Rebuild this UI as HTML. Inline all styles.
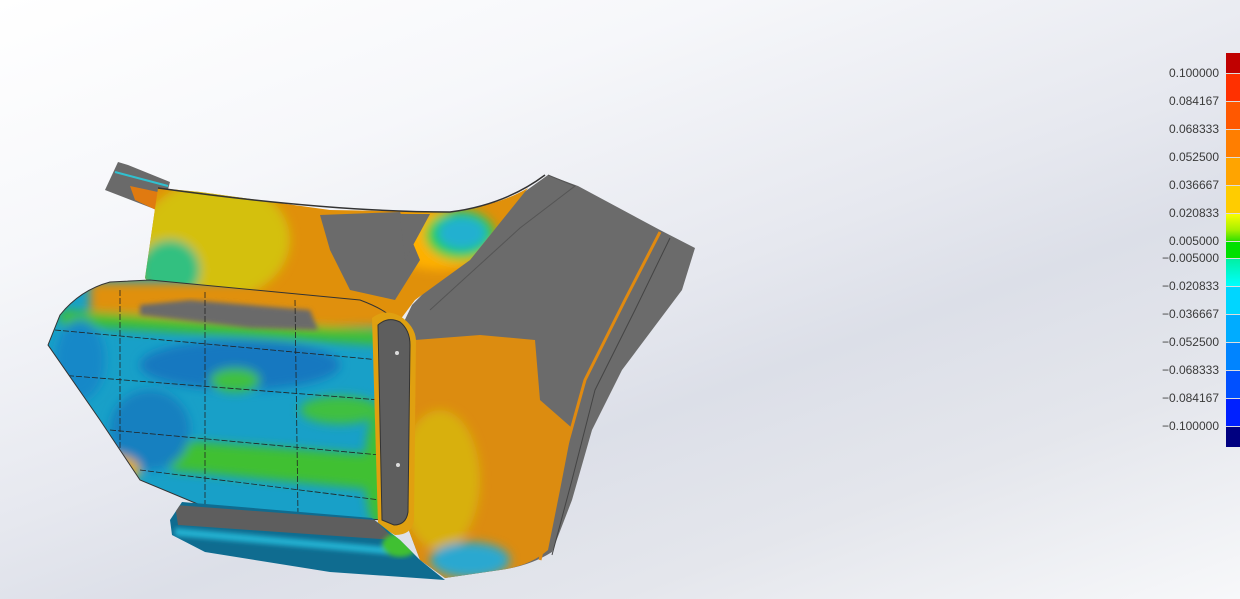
<!DOCTYPE html>
<html><head><meta charset="utf-8"><style>
html,body{margin:0;padding:0;width:1240px;height:599px;overflow:hidden;}
body{background:linear-gradient(160deg,#ffffff 0%,#f6f7fa 25%,#e6e8ef 50%,#dcdfe8 62%,#e4e6ec 78%,#f7f8fa 100%);position:relative;font-family:"Liberation Sans",sans-serif;}
.lg{position:absolute;right:0;width:14px;}
.lb{position:absolute;right:21px;font-size:12px;color:#3a3a3a;transform:translateY(-50%);text-align:right;}
.tk{position:absolute;right:0;width:14px;height:1px;background:#ddd;}
</style></head><body>
<svg width="1240" height="599" style="position:absolute;left:0;top:0">
<defs>
<filter id="b4"><feGaussianBlur stdDeviation="5"/></filter>
<filter id="b2"><feGaussianBlur stdDeviation="2.5"/></filter>
<clipPath id="boxc"><path d="M60,315 Q80,290 110,282 L150,280 L360,300 Q392,312 398,325 L385,520 L300,515 L200,505 L140,480 L100,420 L48,345 Z"/></clipPath>
<clipPath id="upc"><path d="M158,188 L200,192 L330,210 L450,212 Q500,205 528,188 L470,260 L415,300 L400,320 L360,300 L150,285 L145,278 Z"/></clipPath>
<clipPath id="lowc"><path d="M415,340 L480,335 L535,340 L540,400 L572,428 L560,490 L548,550 Q530,566 500,570 L445,578 L420,560 L405,520 Z"/></clipPath>
<clipPath id="lipc"><path d="M170,520 L182,502 L372,518 L400,540 L420,560 L445,580 L330,572 L205,552 L172,535 Z"/></clipPath>
</defs>
<path d="M105,190 L118,162 L128,165 L170,182 L162,212 Z" fill="#6a6a6a"/>
<path d="M130,186 L158,192 L156,210 L135,200 Z" fill="#e07a10"/>
<path d="M115,172 L168,186" stroke="#30c0d0" stroke-width="2"/>
<path d="M412,305 L520,195 L548,175 L578,186 L660,230 L695,248 L682,290 L622,370 L592,430 L572,500 L552,552 Q530,566 500,570 L445,578 L420,560 L405,520 L400,330 Z" fill="#6b6b6b"/>
<path d="M548,175 L575,186 L520,228 L430,310" stroke="#555" fill="none"/>
<path d="M660,232 L625,300 L585,380 L560,470 L540,560" stroke="#e08a10" stroke-width="3" fill="none"/>
<path d="M670,238 L635,310 L595,390 L572,480 L552,555" stroke="#444" fill="none"/>
<g clip-path="url(#upc)">
<rect x="140" y="180" width="400" height="140" fill="#e0900a"/>
<g filter="url(#b4)">
<ellipse cx="215" cy="240" rx="75" ry="60" fill="#d4c010"/>
<ellipse cx="170" cy="270" rx="30" ry="30" fill="#30c080"/>
<ellipse cx="440" cy="240" rx="55" ry="30" fill="#ffb000"/>
<ellipse cx="460" cy="235" rx="35" ry="25" fill="#20d040"/>
<ellipse cx="462" cy="233" rx="25" ry="17" fill="#20b0d0"/>
</g>
<path d="M320,215 L400,212 L420,260 L395,300 L350,290 L330,250 Z" fill="#6b6b6b"/>
<path d="M400,214 L430,214 L405,260 Z" fill="#6b6b6b"/>
<path d="M490,260 L530,190 L540,260 L430,310 L415,300 Z" fill="#6b6b6b"/>
</g>
<path d="M158,188 Q330,212 450,212 Q505,205 545,175" stroke="#333" stroke-width="1.5" fill="none"/>
<g clip-path="url(#lowc)">
<rect x="400" y="330" width="180" height="260" fill="#dc8c10"/>
<g filter="url(#b4)"><ellipse cx="440" cy="480" rx="40" ry="70" fill="#d8b010"/>
<ellipse cx="470" cy="560" rx="40" ry="18" fill="#2aa8d0"/></g>
</g>
<g clip-path="url(#boxc)">
<rect x="40" y="270" width="370" height="260" fill="#18a0c8"/>
<g filter="url(#b4)">
<rect x="90" y="282" width="310" height="45" fill="#e09010"/>
<path d="M60,310 L380,330 L380,345 L60,325 Z" fill="#40c030"/>
<ellipse cx="240" cy="365" rx="100" ry="25" fill="#1878c0"/>
<ellipse cx="80" cy="360" rx="25" ry="40" fill="#1888c8"/>
<ellipse cx="235" cy="380" rx="25" ry="12" fill="#40c040"/>
<ellipse cx="340" cy="410" rx="40" ry="14" fill="#40c040"/>
<path d="M170,440 L380,455 L380,490 L170,470 Z" fill="#40c030"/>
<ellipse cx="150" cy="430" rx="40" ry="40" fill="#1880c0"/>
<ellipse cx="110" cy="470" rx="30" ry="16" fill="#e0b010"/>
<ellipse cx="380" cy="470" rx="15" ry="60" fill="#40c030"/>
</g>
<path d="M140,305 L190,300 L310,310 L318,330 L250,328 L140,315 Z" fill="#6b6b6b" filter="url(#b2)"/>
<g stroke="#222" stroke-width="0.8" fill="none" stroke-dasharray="6,2">
<path d="M120,290 L120,480"/><path d="M205,292 L205,505"/><path d="M295,300 L298,515"/>
<path d="M55,330 L380,360"/><path d="M60,375 L380,400"/><path d="M110,430 L380,455"/><path d="M140,470 L380,500"/>
</g>
</g>
<path d="M60,315 Q80,290 110,282 L150,280 L360,300 Q392,312 398,325 L385,520 L300,515 L200,505 L140,480 L100,420 L48,345 Z" fill="none" stroke="#333"/>
<path d="M372,318 Q385,308 400,316 Q415,326 416,340 L414,520 Q412,535 395,535 L378,525 Z" fill="#e0a010"/>
<path d="M378,325 Q388,316 400,322 Q410,330 410,345 L408,512 Q406,525 394,525 L382,520 Z" fill="#5e5e5e" stroke="#333"/>
<circle cx="397" cy="353" r="2" fill="#ddd"/><circle cx="398" cy="465" r="2" fill="#ddd"/>
<g clip-path="url(#lipc)">
<rect x="165" y="495" width="290" height="90" fill="#0f6c90"/>
<path d="M175,505 L375,520 L395,540 L178,525 Z" fill="#5e5e5e"/>
<g filter="url(#b2)"><path d="M175,528 L400,548 L405,556 L175,536 Z" fill="#20b0d0"/>
<ellipse cx="400" cy="545" rx="18" ry="12" fill="#40c030"/></g>
</g>
</svg>
<div class="lg" style="top:53px;height:20px;background:#c00000"></div>
<div class="lg" style="top:73px;height:28px;background:#ff3000"></div>
<div class="lg" style="top:101px;height:28px;background:#ff5800"></div>
<div class="lg" style="top:129px;height:28px;background:#ff7e00"></div>
<div class="lg" style="top:157px;height:28px;background:#ffa400"></div>
<div class="lg" style="top:185px;height:28px;background:#ffcc00"></div>
<div class="lg" style="top:213px;height:28px;background:linear-gradient(#ffff00,#a8f000 60%,#30e000)"></div>
<div class="lg" style="top:241px;height:17px;background:#00e000"></div>
<div class="lg" style="top:258px;height:28px;background:linear-gradient(#00f0a0,#00ffff)"></div>
<div class="lg" style="top:286px;height:28px;background:#00d6ff"></div>
<div class="lg" style="top:314px;height:28px;background:#00acff"></div>
<div class="lg" style="top:342px;height:28px;background:#0084ff"></div>
<div class="lg" style="top:370px;height:28px;background:#0050ff"></div>
<div class="lg" style="top:398px;height:28px;background:#0020ff"></div>
<div class="lg" style="top:426px;height:21px;background:#000080"></div>
<div class="tk" style="top:73px"></div><div class="tk" style="top:101px"></div><div class="tk" style="top:129px"></div><div class="tk" style="top:157px"></div><div class="tk" style="top:185px"></div><div class="tk" style="top:213px"></div><div class="tk" style="top:241px"></div><div class="tk" style="top:258px"></div><div class="tk" style="top:286px"></div><div class="tk" style="top:314px"></div><div class="tk" style="top:342px"></div><div class="tk" style="top:370px"></div><div class="tk" style="top:398px"></div><div class="tk" style="top:426px"></div>
<div class="lb" style="top:73px">0.100000</div>
<div class="lb" style="top:101px">0.084167</div>
<div class="lb" style="top:129px">0.068333</div>
<div class="lb" style="top:157px">0.052500</div>
<div class="lb" style="top:185px">0.036667</div>
<div class="lb" style="top:213px">0.020833</div>
<div class="lb" style="top:241px">0.005000</div>
<div class="lb" style="top:258px">−0.005000</div>
<div class="lb" style="top:286px">−0.020833</div>
<div class="lb" style="top:314px">−0.036667</div>
<div class="lb" style="top:342px">−0.052500</div>
<div class="lb" style="top:370px">−0.068333</div>
<div class="lb" style="top:398px">−0.084167</div>
<div class="lb" style="top:426px">−0.100000</div>
</body></html>
